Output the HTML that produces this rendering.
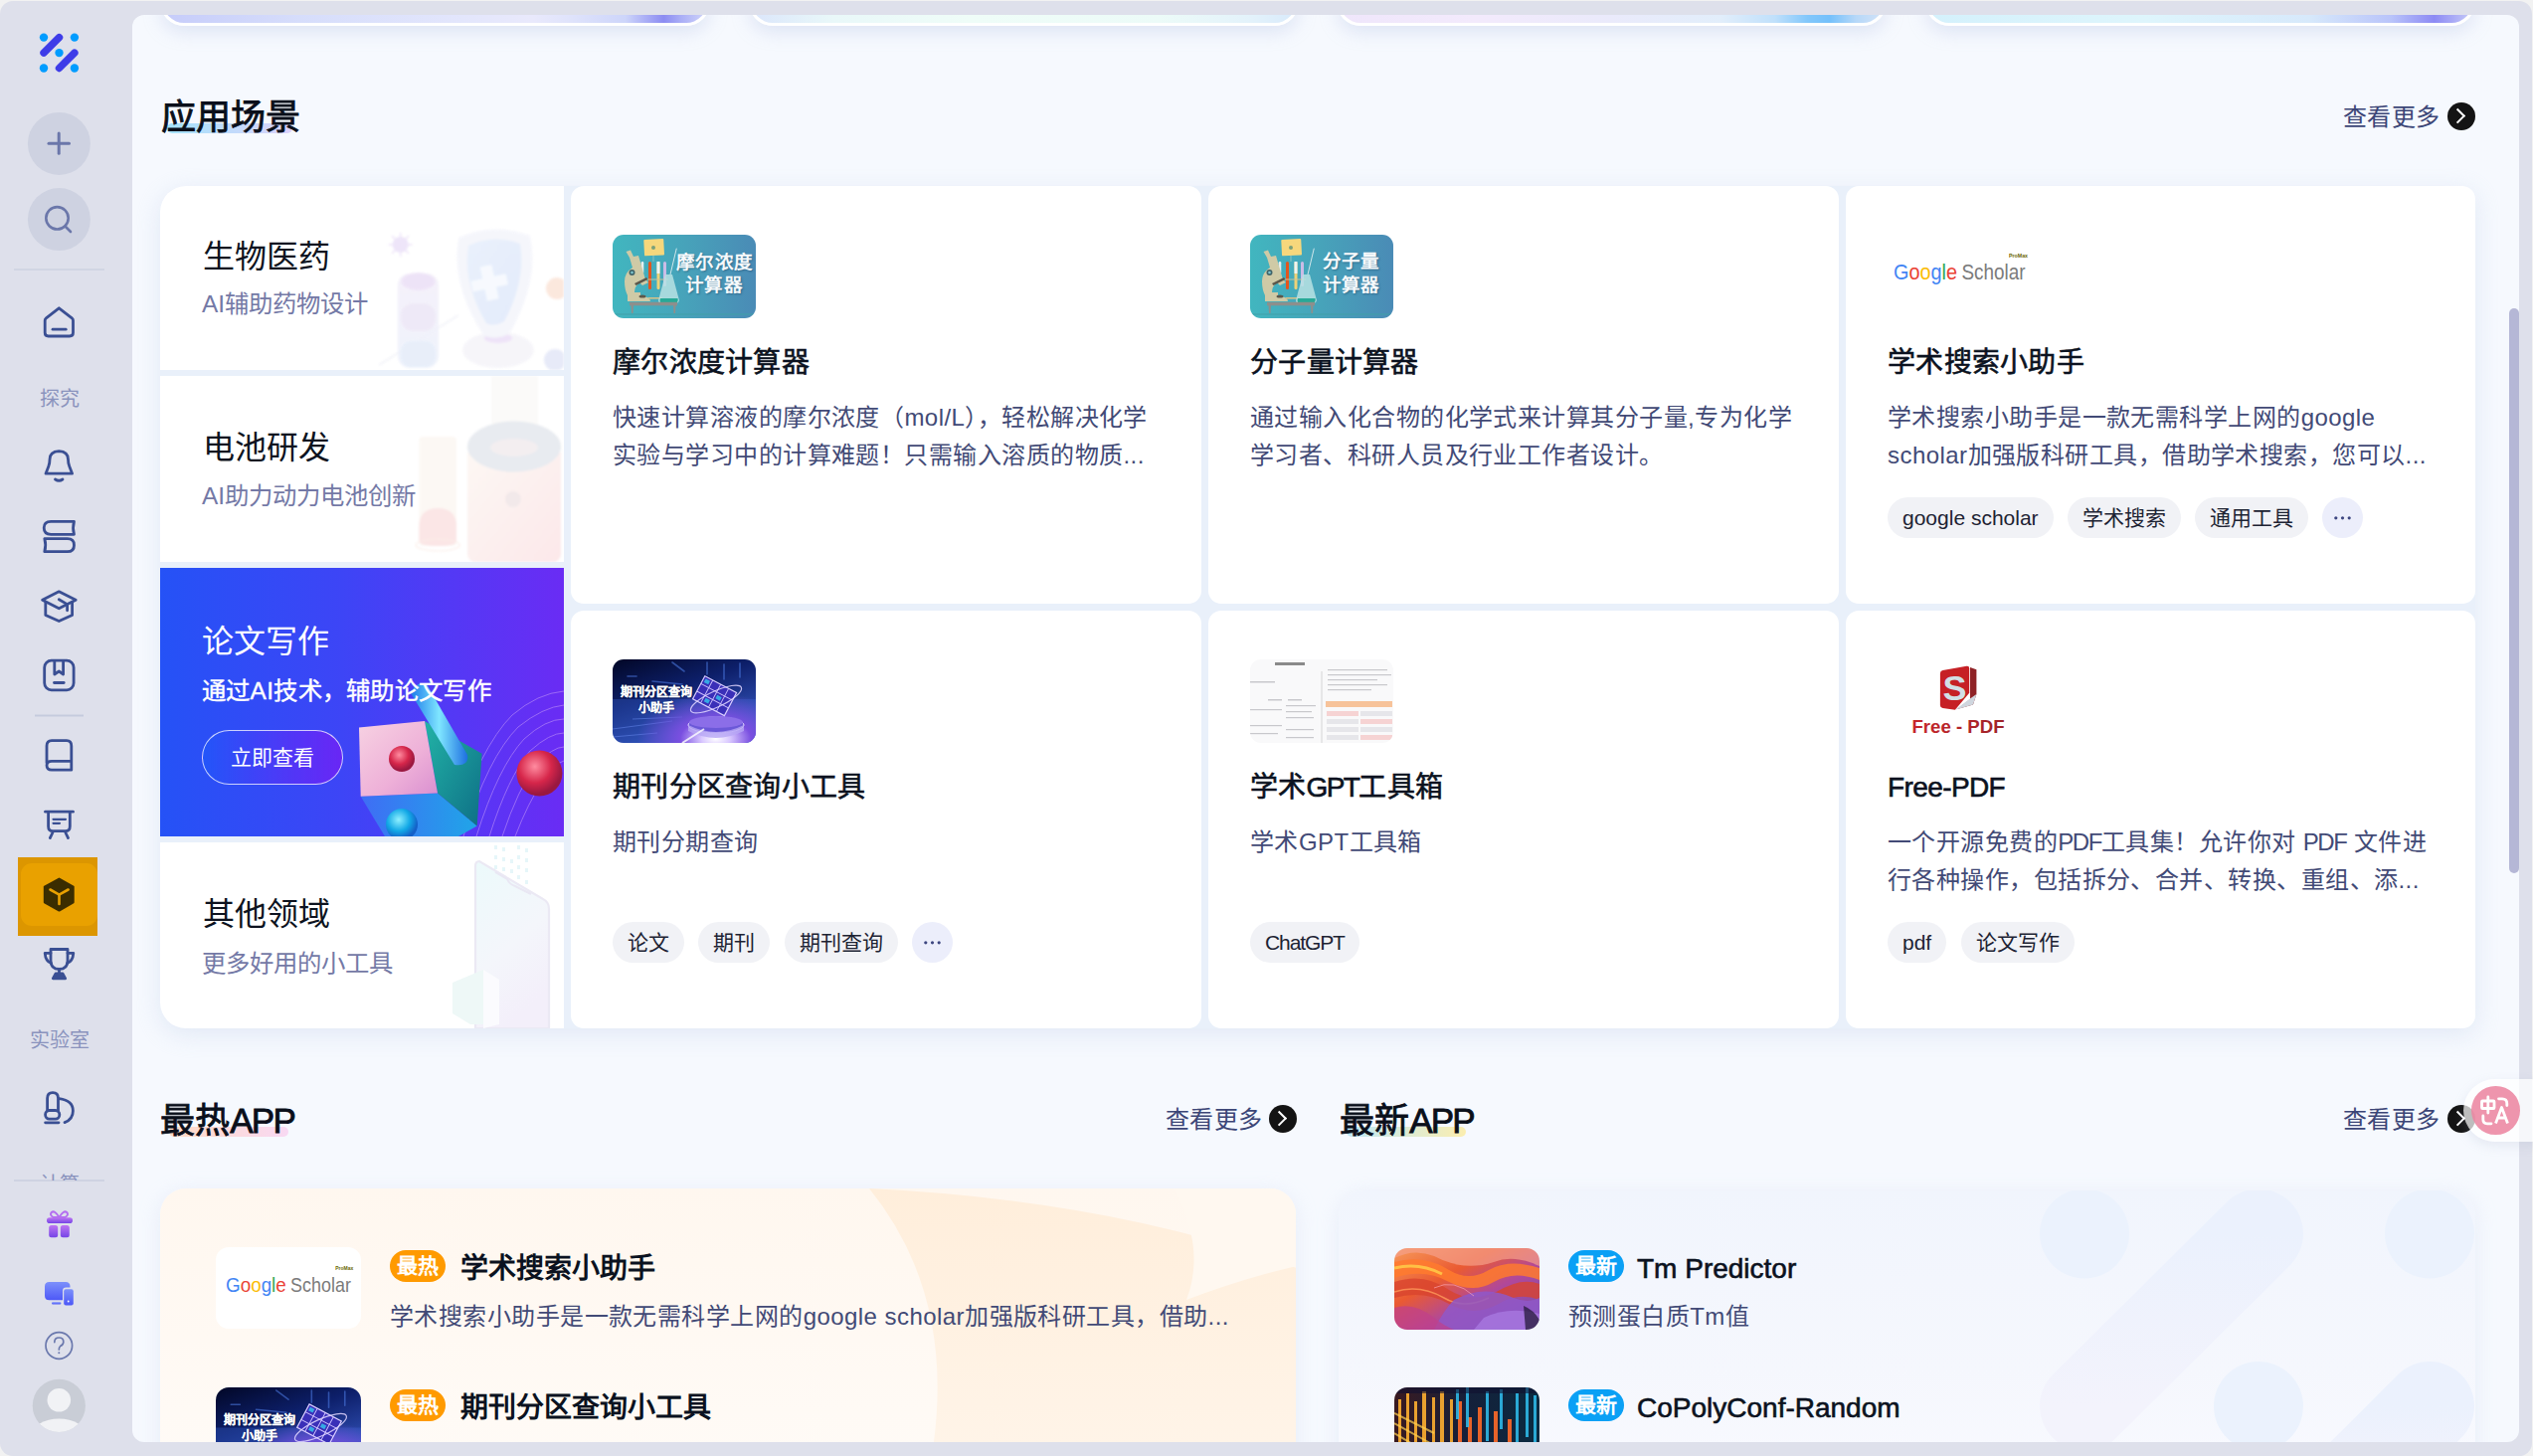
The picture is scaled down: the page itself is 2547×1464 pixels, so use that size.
<!DOCTYPE html>
<html lang="zh-CN"><head><meta charset="utf-8">
<style>
*{box-sizing:border-box;margin:0;padding:0}
html,body{width:2547px;height:1464px;overflow:hidden;background:#f2f2f2;font-family:"Liberation Sans",sans-serif}
.abs{position:absolute}
#frame{position:absolute;left:0;top:1px;width:2546px;height:1463px;background:#dee0eb;border-radius:13px}
#panel{position:absolute;left:133px;top:15px;width:2400px;height:1435px;background:#f6f9fe;border-radius:12px;overflow:hidden}
.ic{position:absolute;left:0;width:119px;display:flex;justify-content:center}
.lbl{position:absolute;left:0;width:119px;text-align:center;font-size:20px;color:#8a93bd;line-height:24px}
.ban{position:absolute;top:0;width:553.1px;height:26px;border:3px solid #fff;border-top:0;border-radius:0 0 24px 24px;box-shadow:0 6px 18px rgba(175,190,225,.35)}
.hl{position:absolute;height:10px;border-radius:5px}
.h2{position:absolute;font-size:35px;-webkit-text-stroke:.85px #0a0f1a;color:#0a0f1a;line-height:50px;white-space:nowrap}
.more{position:absolute;font-size:24px;letter-spacing:.4px;color:#3c4677;line-height:32px;white-space:nowrap}
.arr{position:absolute;width:28px;height:28px;border-radius:50%;background:#141414}
.arr:after{content:"";position:absolute;left:5.4px;top:7.8px;width:10.6px;height:10.6px;box-sizing:border-box;border-right:2.1px solid #fff;border-top:2.1px solid #fff;transform:rotate(45deg)}
.cat{position:absolute;left:161px;width:406px;background:#fff;overflow:hidden}
.catt{position:absolute;left:42.5px;font-size:32px;color:#0d1320;line-height:40px;white-space:nowrap}
.cats{position:absolute;left:42px;font-size:24.4px;color:#7479a6;line-height:32px;white-space:nowrap}
.card{position:absolute;width:634px;height:420px;background:#fff;border-radius:13px}
.img{position:absolute;left:42px;top:49px;width:144px;height:84px;border-radius:11px;overflow:hidden}
.imgt{position:absolute;color:#f6f9fb;font-weight:bold;font-size:18.5px;line-height:24px;text-align:center;text-shadow:1px 1px 2px rgba(20,60,90,.45);letter-spacing:.3px;white-space:nowrap}
.ct{position:absolute;left:42px;top:157.5px;font-size:28px;letter-spacing:.25px;-webkit-text-stroke:.6px #0b1220;color:#0b1220;line-height:40px;white-space:nowrap}
.cd{position:absolute;left:42px;top:213.8px;font-size:24px;letter-spacing:.45px;color:#424a76;line-height:38px;white-space:nowrap}
.tags{position:absolute;left:42px;top:313px;display:flex;gap:14.3px}
.tag{height:41px;line-height:41px;padding:0 15px;border-radius:21px;background:#f1f2f6;font-size:21px;color:#1d2333;white-space:nowrap}
.tag.dots{width:41px;padding:0;background:#eceefb}
.gs{position:absolute;font-weight:normal;letter-spacing:-.5px;white-space:nowrap;line-height:1}
.logo{position:absolute;width:146px;height:82px;border-radius:13px;overflow:hidden}
.badge{position:absolute;width:56px;height:32px;border-radius:16px;color:#fff;font-weight:bold;font-size:21px;line-height:32px;text-align:center}
.hot{background:#ff9a00}.new{background:#0aa0f5}
.lt{position:absolute;font-size:28px;font-weight:bold;color:#0b1220;line-height:40px;white-space:nowrap}
.ld{position:absolute;font-size:24px;letter-spacing:.45px;color:#424a76;line-height:38px;white-space:nowrap}
.lat{font-weight:normal;-webkit-text-stroke:.6px #0b1220}
.jt{font-size:12px;line-height:16px;letter-spacing:0;-webkit-text-stroke:.25px #fff;text-shadow:0 0 2px rgba(0,0,20,.6)}
</style></head><body>
<div id="frame"></div>
<svg width="0" height="0" style="position:absolute"><defs>
<linearGradient id="labbg" x1="0" y1="0" x2="1" y2="0"><stop offset="0" stop-color="#41b6bf"/><stop offset=".5" stop-color="#47a3ba"/><stop offset="1" stop-color="#4a8bb6"/></linearGradient>
<radialGradient id="jglow" cx=".72" cy=".95" r=".55"><stop offset="0" stop-color="#ffffff"/><stop offset=".18" stop-color="#d9c8ff"/><stop offset=".45" stop-color="#7a4fe0"/><stop offset="1" stop-color="#7a4fe0" stop-opacity="0"/></radialGradient>
<linearGradient id="jbg" x1="0" y1="0" x2=".6" y2="1"><stop offset="0" stop-color="#020726"/><stop offset=".45" stop-color="#0d1f6a"/><stop offset="1" stop-color="#3557c0"/></linearGradient>
<symbol id="jour" viewBox="0 0 144 84">
 <rect width="144" height="84" fill="url(#jbg)"/>
 <g stroke="#4f7ee8" stroke-width="1.6" opacity=".55" stroke-linecap="round"><line x1="60" y1="3" x2="72" y2="12"/><line x1="15" y1="17" x2="24" y2="17"/><line x1="40" y1="22" x2="70" y2="25"/><line x1="95" y1="3" x2="95" y2="15"/><line x1="112" y1="5" x2="112" y2="20"/><line x1="128" y1="4" x2="128" y2="18"/></g>
 <rect x="0" y="40" width="144" height="44" fill="#3a64d0" opacity=".35"/>
 <g stroke="#6a8cf0" stroke-width="1" opacity=".5"><line x1="0" y1="70" x2="60" y2="62"/><line x1="0" y1="78" x2="45" y2="74"/><line x1="20" y1="60" x2="70" y2="58"/></g>
 <rect width="144" height="84" fill="url(#jglow)"/>
 <ellipse cx="104" cy="66" rx="28" ry="8" fill="#6b58d8" stroke="#e8e0ff" stroke-width="1"/>
 <ellipse cx="104" cy="63" rx="27" ry="6" fill="#8b6ee8"/>
 <path d="M76 66 Q104 80 132 66 V72 Q104 86 76 72 Z" fill="#b8a8f5" opacity=".8"/>
 <g transform="rotate(28 103 38)">
  <rect x="84" y="24" width="36" height="26" fill="#3a2fb8" stroke="#d8ccff" stroke-width="1.2"/>
  <g stroke="#cfc2ff" stroke-width=".9"><line x1="93" y1="24" x2="93" y2="50"/><line x1="102" y1="24" x2="102" y2="50"/><line x1="111" y1="24" x2="111" y2="50"/><line x1="84" y1="32.6" x2="120" y2="32.6"/><line x1="84" y1="41.3" x2="120" y2="41.3"/></g>
  <g fill="#36c8f0" opacity=".8"><rect x="86" y="26" width="5" height="4"/><rect x="104" y="35" width="5" height="4"/><rect x="95" y="43" width="5" height="4"/></g>
 </g>
 <ellipse cx="104" cy="40" rx="28" ry="8" transform="rotate(-25 104 40)" fill="none" stroke="#e0d6ff" stroke-width="1.2" opacity=".85"/>
 <path d="M70 84 L92 70" stroke="#fff" stroke-width="2" opacity=".8"/>
</symbol>
<symbol id="gsl" viewBox="0 0 140 40">
 <text x="0" y="28" font-family="Liberation Sans" font-size="22" textLength="64" lengthAdjust="spacingAndGlyphs"><tspan fill="#4285f4">G</tspan><tspan fill="#ea4335">o</tspan><tspan fill="#fbbc05">o</tspan><tspan fill="#4285f4">g</tspan><tspan fill="#34a853">l</tspan><tspan fill="#ea4335">e</tspan></text>
 <text x="68.5" y="28" font-family="Liberation Sans" font-size="22" fill="#7b7b7b" textLength="64" lengthAdjust="spacingAndGlyphs">Scholar</text>
 <text x="116" y="5.5" font-family="Liberation Sans" font-weight="bold" font-size="5" fill="#6b6500" textLength="19" lengthAdjust="spacingAndGlyphs">ProMax</text>
</symbol>
<symbol id="lab" viewBox="0 0 144 84">
 <rect width="144" height="84" fill="url(#labbg)"/>
 <rect x="31.6" y="4.6" width="20" height="16.3" rx="1" fill="#f6d77c" transform="rotate(-3 41 12)"/>
 <circle cx="41" cy="13" r="2" fill="#7aa07a"/>
 <line x1="41" y1="21" x2="41" y2="27" stroke="#9fc9c0" stroke-width=".8"/>
 <rect x="28.7" y="27" width="2.6" height="12" rx="1.2" fill="#e6f0f0"/>
 <rect x="36" y="27" width="3" height="28" rx="1.5" fill="#e2561e"/>
 <rect x="44.5" y="27" width="3" height="28" rx="1.5" fill="#efd277"/>
 <rect x="44.5" y="27" width="3" height="12" fill="#eef4f2"/>
 <rect x="51" y="27" width="3" height="25" rx="1.5" fill="#cbbce6"/>
 <line x1="27" y1="45" x2="56" y2="45" stroke="#c8c39a" stroke-width="1"/>
 <path d="M13.5 17 L18 15.5 L21 22 L26 21 L33 45 L36 48 L30 51 L27 48 Q22 52 22 58 L28 58 L28 62 Q38 62 38 67 H15 V61 Q12 55 12 47 Q12 38 20 33 L17 23 Z" fill="#cfcaa6"/>
 <circle cx="19.5" cy="38" r="3" fill="#41656a"/><circle cx="19.5" cy="38" r="1.3" fill="#7fc7d0"/>
 <path d="M22 49 L34 43 L35.5 45 L23.5 51 Z" fill="#5c574a"/>
 <ellipse cx="30" cy="62" rx="3.5" ry="1.6" fill="#5c574a"/>
 <rect x="36" y="63" width="14" height="1.6" fill="#d2c18a"/>
 <line x1="64.3" y1="13.7" x2="58" y2="40" stroke="#cfe6ea" stroke-width="1"/>
 <path d="M53 40 H60 L67 66 Q66 70 60 70 H52 Q46 70 46 66 Z" fill="#b9e2e3" opacity=".85"/>
 <path d="M48 64 H65.5 Q67 69 60 69.5 H52 Q46 69 48 64 Z" fill="#27a997"/>
 <rect x="17" y="67.8" width="48" height="3.5" fill="#8d8f8c"/>
 <path d="M18.5 71 H21 L20.5 79 H19 Z M61 71 H63.5 L63 79 H61.5 Z" fill="#8d8f8c"/>
 <rect x="0" y="79" width="144" height="2" fill="#3f9fa8" opacity=".5"/>
</symbol>
</defs></svg>

<!-- SIDEBAR -->
<svg class="abs" style="left:0;top:0" width="120" height="1464" viewBox="0 0 120 1464">
  <!-- logo -->
  <g fill="#009cff"><circle cx="44" cy="37.6" r="4.2"/><circle cx="74.9" cy="37.6" r="4.2"/><circle cx="59.5" cy="53.1" r="4.2"/><circle cx="44" cy="68.5" r="4.2"/><circle cx="74.9" cy="68.5" r="4.2"/></g>
  <g stroke="#3e3ce8" stroke-width="7.4" stroke-linecap="round"><line x1="44" y1="53.1" x2="59.5" y2="37.6"/><line x1="59.5" y1="68.5" x2="74.9" y2="53.1"/></g>
  <!-- plus / search -->
  <circle cx="59.4" cy="144.4" r="31.5" fill="#ced2e1"/>
  <g stroke="#6b77aa" stroke-width="3" stroke-linecap="round"><line x1="49" y1="144.2" x2="69.5" y2="144.2"/><line x1="59.2" y1="134" x2="59.2" y2="154.2"/></g>
  <circle cx="59.4" cy="220.6" r="31.5" fill="#ced2e1"/>
  <g stroke="#6b77aa" stroke-width="2.6" stroke-linecap="round" fill="none"><circle cx="57.5" cy="219.3" r="11.2"/><line x1="65.5" y1="227.5" x2="71" y2="233"/></g>
  <line x1="14" y1="271" x2="105" y2="271" stroke="#c3c9dc" stroke-width="1.2"/>
  <g fill="none" stroke="#3a4f93" stroke-width="2.8" stroke-linecap="round" stroke-linejoin="round">
    <!-- home -->
    <path d="M59.3 309.8 L72.6 320.2 Q73.5 321 73.5 322.2 V334.5 Q73.5 338 70 338 H48.6 Q45.2 338 45.2 334.5 V322.2 Q45.2 321 46.1 320.2 Z"/>
    <line x1="53" y1="331.2" x2="66.2" y2="331.2"/>
    <!-- bell -->
    <path d="M46 476.2 H72.6 L69.8 469 Q68.5 466 68.5 462 Q68.5 454 59.3 453.6 Q50 454 50 462 Q50 466 48.8 469 Z"/>
    <path d="M55.5 482 Q59.3 484.5 63 482"/>
    <!-- books -->
    <path d="M74.5 524.3 H51.2 Q44.2 524.3 44.2 530.8 Q44.2 537.3 51.2 537.3 H74.5 Q72.6 530.8 74.5 524.3 Z"/>
    <path d="M44.8 541.7 H67.8 Q74.5 541.7 74.5 548.2 Q74.5 554.7 67.8 554.7 H44.8 Q46.7 548.2 44.8 541.7 Z"/>
    <!-- grad cap -->
    <path d="M59.3 594.8 L76.2 603.3 L59.3 611.8 L42.6 603.3 Z"/>
    <path d="M45.8 606 V618.4 L59.3 624.6 L72.6 618.4 V606"/>
    <path d="M59.3 602.8 L67.6 607.6 V613.8"/>
    <!-- bookmark box -->
    <rect x="44.7" y="664.2" width="29.4" height="29.6" rx="7"/>
    <path d="M54.8 664.6 V678 L59.3 675 L63.6 678 V664.6"/>
    <line x1="54.5" y1="686.5" x2="64.2" y2="686.5"/>
  </g>
  <line x1="35" y1="719.5" x2="84" y2="719.5" stroke="#c5cbdd" stroke-width="2"/>
  <g fill="none" stroke="#3a4f93" stroke-width="2.8" stroke-linecap="round" stroke-linejoin="round">
    <!-- book -->
    <path d="M47 767 V750 Q47 744.6 52 744.6 H67 Q71.8 744.6 71.8 750 V774.2 H52 Q47 774.2 47 769.6 Q47 765.3 52 765.3 H71.8"/>
    <!-- presentation -->
    <line x1="45.5" y1="816.2" x2="73.5" y2="816.2"/>
    <path d="M48.6 816.6 V831 Q48.6 835.6 53 835.6 H65.8 Q70.3 835.6 70.3 831 V816.6"/>
    <line x1="53.5" y1="823.8" x2="66" y2="823.8" stroke-width="2.2"/>
    <line x1="53.5" y1="827.8" x2="60" y2="827.8" stroke-width="2.2"/>
    <line x1="53" y1="837" x2="50.3" y2="842.6"/>
    <line x1="65.8" y1="837" x2="68.5" y2="842.6"/>
  </g>
  <!-- active -->
  <rect x="18" y="862" width="80" height="79" fill="#dc9600"/>
  <rect x="21" y="868" width="77" height="63" rx="11" fill="#e9a100"/>
  <path d="M59.5 883.6 L73.7 891.6 V907.3 L59.5 915.6 L44.8 907.3 V891.6 Z" fill="#3b2d00" stroke="#3b2d00" stroke-width="2" stroke-linejoin="round"/>
  <g stroke="#e9a100" stroke-width="2.6" stroke-linecap="round" fill="none"><path d="M50.5 894.5 L59.5 899.6 L68.6 894.5"/><line x1="59.5" y1="899.6" x2="59.5" y2="909"/></g>
  <g fill="none" stroke="#3a4f93" stroke-width="2.8" stroke-linecap="round" stroke-linejoin="round">
    <!-- trophy -->
    <path d="M51 954.5 H68 V966 Q68 974.5 59.5 974.5 Q51 974.5 51 966 Z"/>
    <path d="M51 958.3 H45.2 Q45.8 966.5 51.5 968.5"/>
    <path d="M68 958.3 H73.8 Q73.2 966.5 67.5 968.5"/>
    <line x1="59.5" y1="975" x2="59.5" y2="978"/>
    <path d="M53.3 983.8 L56 978.8 H63 L65.7 983.8 Z" fill="#3a4f93"/>
    <!-- microscope -->
    <path d="M47.6 1116.5 V1104.3 Q47.6 1098.6 53 1098.6 Q58.5 1098.6 58.5 1104.3 V1116.5"/>
    <rect x="45.6" y="1116.5" width="14.2" height="8.6" rx="4"/>
    <path d="M59.5 1104.6 Q73.4 1106.5 73.4 1117 Q73.4 1125.5 65 1128.6"/>
    <line x1="45.6" y1="1128.8" x2="59" y2="1128.8"/>
  </g>
  <line x1="14" y1="1187" x2="105" y2="1187" stroke="#bfc6da" stroke-width="1"/>
  <defs>
    <linearGradient id="gg" x1="0" y1="0" x2="0" y2="1"><stop offset="0" stop-color="#bd74f2"/><stop offset="1" stop-color="#7545e6"/></linearGradient>
    <linearGradient id="dg" x1="0" y1="0" x2="0" y2="1"><stop offset="0" stop-color="#7c90fb"/><stop offset="1" stop-color="#4d58f7"/></linearGradient>
  </defs>
  <!-- gift -->
  <g fill="url(#gg)">
    <rect x="47" y="1224.3" width="26" height="5.7" rx="2.8"/>
    <rect x="49.2" y="1232" width="9" height="12.2" rx="2.5"/>
    <rect x="60.8" y="1232" width="9" height="12.2" rx="2.5"/>
    <path d="M59.5 1224 Q55 1216.5 51.8 1219 Q49.5 1221.5 53.5 1224 Z M59.5 1224 Q64 1216.5 67.2 1219 Q69.5 1221.5 65.5 1224 Z" fill="none" stroke="#b46ef0" stroke-width="2"/>
  </g>
  <!-- devices -->
  <g fill="url(#dg)">
    <path d="M49.5 1289 H66 Q70.5 1289 70.5 1293.5 V1294.6 H66.5 Q63 1294.6 63 1298 V1307.2 H49.5 Q45 1307.2 45 1302.7 V1293.5 Q45 1289 49.5 1289 Z"/>
    <rect x="52" y="1309.3" width="9.4" height="2.3" rx="1"/>
    <rect x="64.2" y="1296.2" width="9.6" height="16.2" rx="2"/>
  </g>
  <circle cx="68.7" cy="1308.5" r="0.9" fill="#fff"/>
  <!-- help -->
  <circle cx="59.3" cy="1353" r="13.3" fill="none" stroke="#6a78ad" stroke-width="1.7"/>
  <path d="M54.8 1349.6 Q54.8 1345 59.3 1345 Q63.8 1345 63.8 1349.2 Q63.8 1352 60.6 1353.6 Q59.3 1354.6 59.3 1357" fill="none" stroke="#6a78ad" stroke-width="1.7" stroke-linecap="round"/>
  <circle cx="59.3" cy="1360.2" r="1" fill="#6a78ad"/>
  <!-- avatar -->
  <clipPath id="avc"><circle cx="59.3" cy="1413.4" r="26.6"/></clipPath>
  <circle cx="59.3" cy="1413.4" r="26.6" fill="#c9cdd6"/>
  <g clip-path="url(#avc)" fill="#f1f2f5"><circle cx="59.3" cy="1407.8" r="11.8"/><ellipse cx="59.3" cy="1443" rx="27" ry="16.5"/></g>
</svg>
<div class="lbl" style="top:389px">探究</div>
<div class="lbl" style="top:1034px">实验室</div>
<div class="abs" style="left:0;top:1168px;width:119px;height:19px;overflow:hidden"><div class="lbl" style="top:11px">计算</div></div>

<div id="panel"><div id="pc" style="position:absolute;left:-133px;top:-15px;width:2547px;height:1464px">
<!-- top banners -->
<div class="ban" style="left:161px;background:linear-gradient(90deg,#c6ccfa 0%,#d6ddfb 25%,#e3e6fc 55%,#e9e9fc 68%,#dfe3fb 75%,#cdd5fa 85%,#8c8cf2 92%,#a8acf6 95%,#d0d5fa 100%)"></div>
<div class="ban" style="left:752.6px;background:linear-gradient(90deg,#dbe6fb 0%,#e9f8f9 15%,#effdf8 40%,#ecfbf8 75%,#e3f2fb 92%,#d8eafb 100%)"></div>
<div class="ban" style="left:1344.2px;background:linear-gradient(90deg,#efe6fb 0%,#f3eafc 25%,#eaeafb 50%,#e2eefb 70%,#c0e0fb 80%,#82c7fb 86%,#74c0fb 90%,#b7d8f8 95%,#d3e3f8 100%)"></div>
<div class="ban" style="left:1935.8px;background:linear-gradient(90deg,#d4f1fc 0%,#def5fc 40%,#d7e9fb 70%,#b9c4fa 85%,#8d8af4 93%,#c6cbf8 100%)"></div>
<!-- section heading -->
<div class="hl" style="left:168px;top:124px;width:126px;background:linear-gradient(90deg,#a4e3fb,#dcd2fb)"></div>
<div class="h2" style="left:161.5px;top:93px">应用场景</div>
<div class="more" style="left:2356px;top:102px">查看更多</div>
<div class="arr" style="left:2461px;top:103px"></div>

<!-- grid bg -->
<div class="abs" style="left:161px;top:187px;width:2328px;height:847px;background:#e9f0fa;border-radius:26px 13px 13px 26px;box-shadow:0 6px 24px rgba(200,212,235,.45)"></div>

<!-- categories -->
<div class="cat" style="top:187px;height:185px;border-radius:26px 0 0 0">
  <svg class="abs" style="left:0;top:0;filter:blur(.8px);opacity:.85" width="406" height="185" viewBox="0 0 406 185">
    <defs>
      <linearGradient id="shg" x1="0" y1="0" x2="1" y2="1"><stop offset="0" stop-color="#e6effc"/><stop offset="1" stop-color="#dfe8fb"/></linearGradient>
      <linearGradient id="btg" x1="0" y1="0" x2="0" y2="1"><stop offset="0" stop-color="#f0eaf8"/><stop offset="1" stop-color="#e8eefa"/></linearGradient>
    </defs>
    <line x1="220" y1="180" x2="300" y2="130" stroke="#f1f2f8" stroke-width="1.5"/>
    <circle cx="241.7" cy="59" r="8" fill="#ebe1f8"/>
    <g stroke="#ebe1f8" stroke-width="1.5"><line x1="241.7" y1="47" x2="241.7" y2="71"/><line x1="229.7" y1="59" x2="253.7" y2="59"/><line x1="233" y1="50" x2="250" y2="68"/><line x1="250" y1="50" x2="233" y2="68"/></g>
    <rect x="239" y="88" width="41" height="95" rx="12" fill="url(#btg)" opacity=".8"/>
    <ellipse cx="259.5" cy="96" rx="17" ry="9" fill="#ebdff6"/>
    <rect x="242" y="118" width="35" height="28" rx="12" fill="#ece6f6"/>
    <rect x="242" y="156" width="35" height="26" rx="10" fill="#e4ecf9"/>
    <ellipse cx="340" cy="165" rx="36" ry="18" fill="#f5f4f9"/>
    <ellipse cx="340" cy="153" rx="14" ry="5" fill="#ecdff7"/>
    <path d="M300 52 Q335 36 372 50 Q382 95 352 148 Q338 156 325 150 Q292 100 300 52 Z" fill="#f4f5fb"/>
    <path d="M310 60 Q335 48 362 58 Q368 95 346 136 Q336 142 328 138 Q304 98 310 60 Z" fill="url(#shg)"/>
    <path d="M325 80 H337 V92 H349 V103 H337 V115 H325 V103 H313 V92 H325 Z" fill="#f6f9fe" transform="rotate(-12 331 97)"/>
    <circle cx="399" cy="103" r="11" fill="#fbe4d8"/>
    <circle cx="397" cy="175" r="11" fill="#e3e7f7"/>
  </svg>
  <div class="catt" style="top:50.5px">生物医药</div>
  <div class="cats" style="top:103.4px">AI辅助药物设计</div>
</div>
<div class="cat" style="top:378px;height:187px">
  <svg class="abs" style="left:250px;top:0;filter:blur(.8px)" width="156" height="187" viewBox="0 0 156 187">
    <defs><linearGradient id="bbg" x1="0" y1="0" x2="1" y2="1"><stop offset="0" stop-color="#fdf8f4"/><stop offset="1" stop-color="#fce8ea"/></linearGradient></defs>
    <rect x="83" y="0" width="47" height="96" fill="#fbfaf9"/>
    <rect x="59" y="71" width="94" height="116" rx="8" fill="url(#bbg)"/>
    <ellipse cx="106" cy="71" rx="47" ry="25.5" fill="#e8ebf0"/>
    <ellipse cx="106" cy="72" rx="24" ry="9" fill="#f3eef0"/>
    <circle cx="105" cy="124" r="8" fill="#f2e9ea"/>
    <rect x="10.4" y="61" width="37.6" height="110" rx="4" fill="#fcf8f4"/>
    <path d="M10.4 152 Q10.4 133 29.2 133 Q48 133 48 152 V166 Q48 171 29.2 171 Q10.4 171 10.4 166 Z" fill="#fbe6e6"/>
    <ellipse cx="29.2" cy="170" rx="22" ry="6" fill="none" stroke="#fbeee8" stroke-width="1.2"/>
  </svg>
  <div class="catt" style="top:51.8px">电池研发</div>
  <div class="cats" style="top:105.4px">AI助力动力电池创新</div>
</div>
<div class="cat" style="top:571px;height:270px;background:linear-gradient(90deg,#2552f6 0%,#3d45f6 45%,#6a2cf4 100%);overflow:hidden">
  <svg class="abs" style="left:0;top:0" width="406" height="270" viewBox="0 0 406 270">
    <defs>
      <linearGradient id="cubef" x1="0" y1="0" x2="1" y2="1"><stop offset="0" stop-color="#f7d2e2"/><stop offset=".6" stop-color="#eeb0d8"/><stop offset="1" stop-color="#d98fd0"/></linearGradient>
      <linearGradient id="cubes" x1="0" y1="0" x2="1" y2="1"><stop offset="0" stop-color="#22b3a6"/><stop offset="1" stop-color="#0e6f86"/></linearGradient>
      <linearGradient id="cubeb" x1="0" y1="0" x2="1" y2="0"><stop offset="0" stop-color="#3f6df5"/><stop offset="1" stop-color="#20a5e8"/></linearGradient>
      <radialGradient id="ball" cx=".4" cy=".35" r=".6"><stop offset="0" stop-color="#ff8ca0"/><stop offset=".6" stop-color="#d6264a"/><stop offset="1" stop-color="#9a1840"/></radialGradient>
      <radialGradient id="ballb" cx=".4" cy=".35" r=".6"><stop offset="0" stop-color="#8ff0ff"/><stop offset=".6" stop-color="#12a8e6"/><stop offset="1" stop-color="#1460c8"/></radialGradient>
      <linearGradient id="tube" x1="0" y1="0" x2="1" y2="0"><stop offset="0" stop-color="#1d7bea"/><stop offset=".5" stop-color="#7fe6ff"/><stop offset="1" stop-color="#1d6fe0"/></linearGradient>
    </defs>
    <g fill="none" stroke="#c59af7" stroke-width="1" opacity=".55">
      <path d="M305 270 Q330 190 360 160 Q385 140 406 138"/><path d="M318 270 Q340 200 366 172 Q388 152 406 152"/><path d="M331 270 Q350 210 372 184 Q392 166 406 166"/><path d="M344 270 Q360 222 378 198 Q395 180 406 180"/><path d="M357 270 Q370 236 385 214 Q398 196 406 194"/><path d="M292 270 Q322 180 354 148 Q380 126 406 124"/>
    </g>
    <path d="M201.7 229.7 L279 226.4 L318.7 259.4 L300 270 L226 270 Z" fill="url(#cubeb)"/>
    <path d="M266 153.9 L323.6 186.8 L318.7 259.4 L279 226.4 Z" fill="url(#cubes)"/>
    <path d="M200 160.4 L266 153.9 L279 226.4 L201.7 229.7 Z" fill="url(#cubef)"/>
    <circle cx="243" cy="192" r="13" fill="url(#ball)"/>
    <path d="M252 126 Q256 114 268 117 L309 188 Q311 200 296 198 Z" fill="url(#tube)"/>
    <circle cx="243" cy="258" r="16" fill="url(#ballb)"/>
    <circle cx="381.4" cy="206.6" r="23" fill="url(#ball)"/>
  </svg>
  <div class="catt" style="top:54.4px;color:#fff;left:41.5px">论文写作</div>
  <div class="cats" style="top:108px;color:#fff;-webkit-text-stroke:.4px #fff;letter-spacing:.3px">通过AI技术，辅助论文写作</div>
  <div class="abs" style="left:42px;top:163px;width:141.5px;height:55px;border:1.2px solid rgba(255,255,255,.75);border-radius:28px;background:linear-gradient(90deg,rgba(30,90,250,.6),rgba(110,35,245,.9));color:#fff;font-size:21px;font-weight:500;line-height:53px;text-align:center">立即查看</div>
</div>
<div class="cat" style="top:847px;height:187px;border-radius:0 0 0 26px">
  <svg class="abs" style="left:285px;top:0" width="121" height="187" viewBox="0 0 121 187">
    <defs><linearGradient id="phg" x1="0" y1="0" x2=".4" y2="1"><stop offset="0" stop-color="#ecfafb"/><stop offset=".6" stop-color="#f4f6fb"/><stop offset="1" stop-color="#f3effa"/></linearGradient></defs>
    <g fill="#e6f6f9"><rect x="51" y="3" width="3" height="4"/><rect x="59" y="5" width="3" height="4"/><rect x="74" y="3" width="3" height="4"/><rect x="82" y="6" width="3" height="4"/>
    <rect x="51" y="13" width="3" height="4"/><rect x="59" y="15" width="3" height="4"/><rect x="67" y="17" width="3" height="4"/><rect x="74" y="13" width="3" height="4"/><rect x="82" y="16" width="3" height="4"/>
    <rect x="51" y="23" width="3" height="4"/><rect x="59" y="25" width="3" height="4"/><rect x="67" y="27" width="3" height="4"/><rect x="74" y="23" width="3" height="4"/><rect x="82" y="26" width="3" height="4"/>
    <rect x="59" y="35" width="3" height="4"/><rect x="74" y="33" width="3" height="4"/><rect x="82" y="38" width="3" height="4"/></g>
    <path d="M36 19 Q32 19 32 24 V187 H106 V67 Q106 60 100 57 Z" fill="url(#phg)" stroke="#ebe9f4" stroke-width="2.2"/>
    <path d="M52 30 L64 37 Q66 42 72 44 L88 52" fill="none" stroke="#e9e7f3" stroke-width="2"/>
    <path d="M9 141 L40 128 L56 138 V183 L27 183 L9 172 Z" fill="#eef8f7"/>
    <path d="M40 128 L56 138 V183 L40 187 Z" fill="#fbfbfe"/>
  </svg>
  <div class="catt" style="top:52px">其他领域</div>
  <div class="cats" style="top:105.9px">更多好用的小工具</div>
</div>

<!-- app cards -->
<div class="card" style="left:574px;top:187px;border-radius:13px 13px 13px 13px">
  <div class="img"><svg class="abs" style="left:0;top:0" width="144" height="84"><use href="#lab"/></svg>
    <div class="imgt" style="left:64px;top:15.5px;width:76px;text-align:left">摩尔浓度</div><div class="imgt" style="left:73px;top:38.5px;width:60px;text-align:left">计算器</div>
  </div>
  <div class="ct">摩尔浓度计算器</div>
  <div class="cd">快速计算溶液的摩尔浓度（mol/L），轻松解决化学<br>实验与学习中的计算难题！只需输入溶质的物质...</div>
</div>
<div class="card" style="left:1215px;top:187px">
  <div class="img"><svg class="abs" style="left:0;top:0" width="144" height="84"><use href="#lab"/></svg>
    <div class="imgt" style="left:72.5px;top:15px;width:60px;text-align:left">分子量</div><div class="imgt" style="left:72.5px;top:38.5px;width:60px;text-align:left">计算器</div>
  </div>
  <div class="ct">分子量计算器</div>
  <div class="cd">通过输入化合物的化学式来计算其分子量,专为化学<br>学习者、科研人员及行业工作者设计。</div>
</div>
<div class="card" style="left:1856px;top:187px;width:633px">
  <div class="img" style="overflow:visible"><svg class="abs" style="left:6px;top:17px" width="140" height="40" viewBox="0 0 140 40"><use href="#gsl"/></svg></div>
  <div class="ct">学术搜索小助手</div>
  <div class="cd">学术搜索小助手是一款无需科学上网的google<br>scholar加强版科研工具，借助学术搜索，您可以...</div>
  <div class="tags"><span class="tag">google scholar</span><span class="tag">学术搜索</span><span class="tag">通用工具</span><span class="tag dots"><svg width="41" height="41" viewBox="0 0 41 41" style="display:block"><g fill="#3d4680"><circle cx="13.8" cy="20.8" r="1.6"/><circle cx="20.5" cy="20.8" r="1.6"/><circle cx="27.2" cy="20.8" r="1.6"/></g></svg></span></div>
</div>

<div class="card" style="left:574px;top:614px">
  <div class="img"><svg class="abs" style="left:0;top:0" width="144" height="84"><use href="#jour"/></svg>
    <div class="imgt jt" style="left:0;top:24.5px;width:87px">期刊分区查询<br>小助手</div>
  </div>
  <div class="ct">期刊分区查询小工具</div>
  <div class="cd">期刊分期查询</div>
  <div class="tags"><span class="tag">论文</span><span class="tag">期刊</span><span class="tag">期刊查询</span><span class="tag dots"><svg width="41" height="41" viewBox="0 0 41 41" style="display:block"><g fill="#3d4680"><circle cx="13.8" cy="20.8" r="1.6"/><circle cx="20.5" cy="20.8" r="1.6"/><circle cx="27.2" cy="20.8" r="1.6"/></g></svg></span></div>
</div>
<div class="card" style="left:1215px;top:614px">
  <div class="img" style="background:#f9f9fa">
    <svg class="abs" style="left:0;top:0;filter:blur(.5px)" width="143" height="84" viewBox="0 0 143 84">
      <rect x="25" y="3" width="30" height="3" fill="#8a8a8a"/>
      <line x1="72" y1="12" x2="72" y2="84" stroke="#ccc" stroke-width=".8"/>
      <g fill="#c8c8cc"><rect x="0" y="22" width="25" height="1.5"/><rect x="18" y="40" width="14" height="1.5"/><rect x="38" y="40" width="14" height="1.5"/><rect x="0" y="50" width="32" height="1.2"/><rect x="36" y="46" width="30" height="1.2"/><rect x="36" y="52" width="26" height="1.2"/><rect x="36" y="58" width="28" height="1.2"/><rect x="0" y="66" width="32" height="1.2"/><rect x="0" y="74" width="28" height="1.2"/><rect x="36" y="70" width="28" height="1.2"/><rect x="36" y="78" width="28" height="1.2"/>
      <rect x="78" y="10" width="60" height="1.2"/><rect x="78" y="15" width="64" height="1.2"/><rect x="78" y="20" width="50" height="1.2"/><rect x="78" y="25" width="60" height="1.2"/><rect x="78" y="30" width="44" height="1.2"/></g>
      <rect x="76" y="42" width="67" height="6" fill="#f7c39a"/>
      <g><rect x="77" y="52" width="32" height="5" fill="#f6d3d3"/><rect x="111" y="52" width="32" height="5" fill="#e6e6ea"/><rect x="77" y="60" width="32" height="5" fill="#e6e6ea"/><rect x="111" y="60" width="32" height="5" fill="#f6d3d3"/><rect x="77" y="68" width="32" height="5" fill="#e6e6ea"/><rect x="111" y="68" width="32" height="5" fill="#e6e6ea"/><rect x="77" y="76" width="32" height="5" fill="#e6e6ea"/><rect x="111" y="76" width="32" height="5" fill="#f6d3d3"/></g>
    </svg>
  </div>
  <div class="ct">学术<span style="letter-spacing:-1.6px">GPT</span>工具箱</div>
  <div class="cd">学术GPT工具箱</div>
  <div class="tags"><span class="tag" style="letter-spacing:-1.1px">ChatGPT</span></div>
</div>
<div class="card" style="left:1856px;top:614px;width:633px">
  <div class="img" style="background:transparent">
    <svg class="abs" style="left:0;top:0" width="143" height="84" viewBox="0 0 143 84">
      <path d="M89.4 10.3 L83 8 V40 L70 50 L86 45.5 L89.4 35 Z" fill="#8f2226"/>
      <path d="M82.2 40 L89.4 35 L86 45.5 L67.9 50.7 Z" fill="#cfd6de"/>
      <path d="M55.5 11 L79.5 6.8 Q82.2 6.4 82.2 9.2 V33.7 L67.9 50.7 L55.5 49 Q52.9 48.6 52.9 46 V14 Q52.9 11.5 55.5 11 Z" fill="#c62025"/>
      <text x="67.6" y="41.5" font-family="Liberation Sans" font-weight="bold" font-size="36" fill="#d2dfe5" text-anchor="middle" transform="scale(1 .95)" style="transform-origin:67px 28px">S</text>
      <defs><linearGradient id="fpg" x1="0" x2="1"><stop offset="0" stop-color="#c8262c"/><stop offset="1" stop-color="#9e2328"/></linearGradient></defs><text x="71" y="73.6" font-family="Liberation Sans" font-weight="bold" font-size="18.6" fill="url(#fpg)" text-anchor="middle">Free - PDF</text>
    </svg>
  </div>
  <div class="ct" style="letter-spacing:-.6px">Free-PDF</div>
  <div class="cd">一个开源免费的<span style="letter-spacing:-1.4px">PDF</span>工具集！允许你对 <span style="letter-spacing:-1.4px">PDF</span> 文件进<br>行各种操作，包括拆分、合并、转换、重组、添...</div>
  <div class="tags"><span class="tag">pdf</span><span class="tag">论文写作</span></div>
</div>

<!-- bottom sections -->
<div class="hl" style="left:170px;top:1133px;width:120px;background:linear-gradient(90deg,#ffdbc6,#f8d9f3)"></div>
<div class="h2" style="left:161.3px;top:1102px">最热<span style="letter-spacing:-1.8px">APP</span></div>
<div class="more" style="left:1172px;top:1110px">查看更多</div>
<div class="arr" style="left:1276px;top:1111px"></div>

<div class="hl" style="left:1354px;top:1133px;width:120px;background:linear-gradient(90deg,#bfe8f7,#fbeeb0)"></div>
<div class="h2" style="left:1347.2px;top:1102px">最新<span style="letter-spacing:-1.8px">APP</span></div>
<div class="more" style="left:2356px;top:1110px">查看更多</div>
<div class="arr" style="left:2461px;top:1111px"></div>

<div class="abs" style="left:161px;top:1195px;width:1142px;height:300px;border-radius:26px;overflow:hidden;background:linear-gradient(180deg,#fff7ef,#fffbf7);box-shadow:0 4px 20px rgba(210,220,240,.4)">
  <svg class="abs" style="left:0;top:0" width="1142" height="300" viewBox="0 0 1142 300">
    <defs><linearGradient id="hpg" x1="0" y1="0" x2="0" y2="1"><stop offset="0" stop-color="#ffeedb"/><stop offset="1" stop-color="#fff5ea"/></linearGradient></defs><path d="M713 0 Q960 12 1143 80 V300 H770 Q810 120 713 0 Z" fill="url(#hpg)"/>
    <path d="M1019 0 Q1052 60 1032 112 Q1090 90 1143 78 V0 Z" fill="#fff8f0"/>
  </svg>
  <div class="logo" style="left:56px;top:59px;background:#fff">
    <svg class="abs" style="left:9.5px;top:17.5px" width="133" height="38" viewBox="0 0 140 40"><use href="#gsl"/></svg>
  </div>
  <div class="badge hot" style="left:231px;top:62px">最热</div>
  <div class="lt" style="left:302px;top:60.5px">学术搜索小助手</div>
  <div class="ld" style="left:231px;top:110px">学术搜索小助手是一款无需科学上网的google scholar加强版科研工具，借助...</div>
  <div class="logo" style="left:56px;top:200px"><svg class="abs" style="left:0;top:0" width="146" height="85" viewBox="0 0 144 84" preserveAspectRatio="none"><use href="#jour"/></svg>
    <div class="imgt jt" style="left:0;top:25px;width:88px">期刊分区查询<br>小助手</div>
  </div>
  <div class="badge hot" style="left:231px;top:202px">最热</div>
  <div class="lt" style="left:302px;top:201px">期刊分区查询小工具</div>
</div>

<div class="abs" style="left:1346px;top:1197px;width:1143px;height:300px;border-radius:26px;overflow:hidden;background:linear-gradient(180deg,#f1f5fd 0%,#f5f7fd 60%,#f9faff 100%);box-shadow:0 4px 20px rgba(210,220,240,.4)">
  <svg class="abs" style="left:0;top:0" width="1143" height="300" viewBox="0 0 1143 300">
    <defs><linearGradient id="ndg" x1="0" y1="0" x2="0" y2="1"><stop offset="0" stop-color="#ebf1fd"/><stop offset="1" stop-color="#f3f3fc"/></linearGradient></defs>
    <g fill="#ebf2fd"><circle cx="750" cy="43.4" r="45"/><circle cx="1097" cy="43.4" r="45"/><circle cx="925" cy="217" r="45"/></g>
    <g stroke="url(#ndg)" stroke-width="90" stroke-linecap="round"><line x1="750" y1="217" x2="925" y2="43.4"/><line x1="1097" y1="217" x2="1020" y2="294"/></g>
  </svg>
  <div class="logo" style="left:56px;top:58px">
    <svg class="abs" style="left:0;top:0;filter:blur(.7px)" width="146" height="82" viewBox="0 0 146 82">
      <defs>
        <linearGradient id="tmbg" x1="0" y1="0" x2="1" y2="1"><stop offset="0" stop-color="#f79a5a"/><stop offset=".35" stop-color="#ea5a32"/><stop offset=".6" stop-color="#b0489a"/><stop offset="1" stop-color="#6a52b8"/></linearGradient>
      </defs>
      <rect width="146" height="82" fill="url(#tmbg)"/>
      <path d="M0 0 H146 V18 Q120 6 100 14 Q70 24 40 8 Q20 0 0 10 Z" fill="#f5a08a" opacity=".7"/>
      <path d="M0 14 Q30 6 55 22 Q75 34 95 22 Q115 10 146 20 V32 Q120 22 100 34 Q80 46 55 34 Q30 20 0 30 Z" fill="#ff7a2e" opacity=".85"/>
      <path d="M0 20 Q25 14 48 26" stroke="#ffd24a" stroke-width="3" fill="none" opacity=".8"/>
      <path d="M0 34 Q30 24 55 42 Q80 58 110 40 Q130 30 146 36 V52 Q125 44 105 56 Q80 70 55 56 Q30 42 0 50 Z" fill="#d8442e" opacity=".8"/>
      <path d="M0 44 Q25 36 50 50 Q70 62 95 50" stroke="#ff9a5a" stroke-width="1.5" fill="none" opacity=".8"/>
      <path d="M60 52 Q90 36 120 50 Q135 56 146 50 V82 H40 Q50 62 60 52 Z" fill="#8f58c8" opacity=".85"/>
      <path d="M90 70 Q115 58 146 66 V82 H80 Z" fill="#a878e0" opacity=".8"/>
      <path d="M0 60 Q20 54 40 70 Q50 78 60 82 H0 Z" fill="#c0408a" opacity=".7"/>
      <path d="M130 58 Q140 62 146 72 V82 H132 Z" fill="#1e1530" opacity=".7"/>
      <path d="M40 40 Q60 30 80 48" stroke="#ffb0c0" stroke-width="1" fill="none" opacity=".6"/>
    </svg>
  </div>
  <div class="badge new" style="left:231px;top:60px">最新</div>
  <div class="lt lat" style="left:300px;top:58.5px">Tm Predictor</div>
  <div class="ld" style="left:231px;top:108px">预测蛋白质Tm值</div>
  <div class="logo" style="left:56px;top:198px">
    <svg class="abs" style="left:0;top:0;filter:blur(.6px)" width="146" height="82" viewBox="0 0 146 82">
      <defs>
        <linearGradient id="cpbg" x1="0" y1="0" x2="1" y2="0"><stop offset="0" stop-color="#3a1a20"/><stop offset=".5" stop-color="#15203a"/><stop offset="1" stop-color="#0a2a40"/></linearGradient>
      </defs>
      <rect width="146" height="82" fill="url(#cpbg)"/>
      <g fill="#ffb030" opacity=".9"><rect x="4" y="12" width="3" height="70"/><rect x="12" y="6" width="3" height="76"/><rect x="20" y="14" width="3" height="68"/><rect x="28" y="4" width="4" height="78"/><rect x="38" y="10" width="3" height="72"/><rect x="46" y="4" width="4" height="78"/><rect x="56" y="12" width="3" height="70"/></g>
      <g fill="#ff6a28" opacity=".9"><rect x="64" y="14" width="4" height="68"/><rect x="74" y="30" width="4" height="52"/><rect x="84" y="20" width="4" height="62"/><rect x="100" y="24" width="4" height="58"/><rect x="114" y="32" width="4" height="50"/></g>
      <g fill="#30c0f0" opacity=".85"><rect x="62" y="2" width="3" height="30"/><rect x="72" y="0" width="3" height="40"/><rect x="92" y="4" width="3" height="50"/><rect x="106" y="2" width="3" height="40"/><rect x="122" y="6" width="3" height="60"/><rect x="132" y="0" width="3" height="50"/><rect x="140" y="8" width="3" height="60"/></g>
      <g stroke="#ffd050" stroke-width="2" opacity=".7"><line x1="0" y1="26" x2="40" y2="46"/><line x1="0" y1="36" x2="36" y2="56"/><line x1="0" y1="46" x2="30" y2="64"/></g>
      <rect x="0" y="0" width="146" height="6" fill="#101030" opacity=".6"/>
    </svg>
  </div>
  <div class="badge new" style="left:231px;top:200px">最新</div>
  <div class="lt lat" style="left:300px;top:198.5px">CoPolyConf-Random</div>
</div>

<!-- scrollbar -->
<div class="abs" style="left:2523px;top:310px;width:10px;height:568px;border-radius:5px;background:#b5b7d6"></div>

<!--CONTENT-->
</div></div>
<!-- translate float -->
<div class="abs" style="left:2476.5px;top:1085px;width:100px;height:63px;border-radius:32px;background:rgba(255,255,255,.72);box-shadow:0 4px 12px rgba(150,160,190,.18)"></div>
<div class="abs" style="left:2485px;top:1092px;width:48.5px;height:48.5px;border-radius:50%;background:rgba(236,134,162,.88)"></div>
<svg class="abs" style="left:2485px;top:1092px" width="49" height="49" viewBox="0 0 49 49">
 <g fill="none" stroke="#fff" stroke-width="2.8" stroke-linecap="round" stroke-linejoin="round">
  <rect x="10.5" y="15" width="12.5" height="7.5" rx=".8"/><line x1="16.8" y1="11" x2="16.8" y2="27"/>
  <path d="M27.5 12.8 H31 Q35.8 12.8 35.8 17.6 V19.5"/>
  <path d="M11.8 30 V33.5 Q11.8 37.8 16 37.8 H20"/>
 </g>
 <path d="M24.5 37.5 L30.5 21.5 L36.5 37.5 M26.8 32 H34.2" fill="none" stroke="#fff" stroke-width="2.8" stroke-linejoin="round"/>
</svg>
</body></html>
